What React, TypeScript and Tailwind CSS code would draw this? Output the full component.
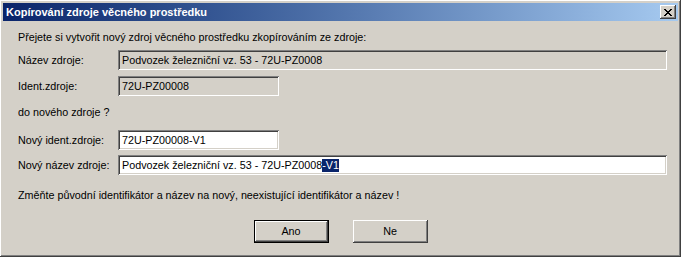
const raised =
  "shadow-[inset_-1px_-1px_#404040,inset_1px_1px_#ffffff,inset_-2px_-2px_#808080,inset_2px_2px_#d4d0c8]";
const sunken =
  "shadow-[inset_1px_1px_#808080,inset_-1px_-1px_#ffffff,inset_2px_2px_#404040,inset_-2px_-2px_#d4d0c8]";

function Field({ width, value, white, selected }: { width: string; value: string; white?: boolean; selected?: string }) {
  return (
    <div className={`${width} h-[20px] ${white ? "bg-white" : "bg-[#d4d0c8]"} ${sunken} flex items-center pl-[4px] whitespace-nowrap overflow-hidden`}>
      <span>{value}</span>
      {selected && <span className="bg-[#0a246a] text-white">{selected}</span>}
    </div>
  );
}

function Row({ label, children, mt }: { label: string; children: React.ReactNode; mt: string }) {
  return (
    <div className={`flex items-center ${mt}`}>
      <div className="w-[100px]">{label}</div>
      {children}
    </div>
  );
}

function Button({ label, isDefault }: { label: string; isDefault?: boolean }) {
  return (
    <div className={`w-[75px] h-[23px] bg-[#d4d0c8] flex items-center justify-center ${isDefault ? "border border-black" : ""}`}>
      <div className={`w-full h-full flex items-center justify-center ${raised}`}>{label}</div>
    </div>
  );
}

export default function App() {
  return (
    <div
      className={`w-[681px] h-[257px] bg-[#d4d0c8] p-[3px] text-[10.75px] leading-[13px] text-black ${raised}`}
      style={{ fontFamily: '"Liberation Sans", Arial, sans-serif' }}
    >
      {/* Title bar */}
      <div className="h-[18px] flex items-center justify-between pl-[3px] pr-[2px] bg-gradient-to-r from-[#0a246a] to-[#a6caf0]">
        <span className="text-white font-bold text-[11px]">Kopírování zdroje věcného prostředku</span>
        <div className={`w-[16px] h-[14px] bg-[#d4d0c8] ${raised} flex items-center justify-center`}>
          <svg width="8" height="7" viewBox="0 0 8 7" shapeRendering="crispEdges">
            <path d="M0 0h2v1h1v1h2V1h1V0h2v1H7v1H6v1H5v1h1v1h1v1h1v1H6V6H5V5H3v1H2v1H0V6h1V5h1V4h1V3H2V2H1V1H0z" fill="#000" />
          </svg>
        </div>
      </div>

      {/* Body */}
      <div className="flex flex-col pl-[15px]">
        <div className="mt-[10px]">Přejete si vytvořit nový zdroj věcného prostředku zkopírováním ze zdroje:</div>
        <Row label="Název zdroje:" mt="mt-[6px]">
          <Field width="w-[549px]" value="Podvozek železniční vz. 53 - 72U-PZ0008" />
        </Row>
        <Row label="Ident.zdroje:" mt="mt-[6px]">
          <Field width="w-[161px]" value="72U-PZ00008" />
        </Row>
        <div className="mt-[10px]">do nového zdroje ?</div>
        <Row label="Nový ident.zdroje:" mt="mt-[11px]">
          <Field width="w-[161px]" value="72U-PZ00008-V1" white />
        </Row>
        <Row label="Nový název zdroje:" mt="mt-[5px]">
          <Field width="w-[549px]" value="Podvozek železniční vz. 53 - 72U-PZ0008" selected="-V1" white />
        </Row>
        <div className="mt-[14px]">Změňte původní identifikátor a název na nový, neexistující identifikátor a název !</div>
      </div>

      <div className="flex justify-center gap-[24px] mt-[18px]">
        <Button label="Ano" isDefault />
        <Button label="Ne" />
      </div>
    </div>
  );
}
